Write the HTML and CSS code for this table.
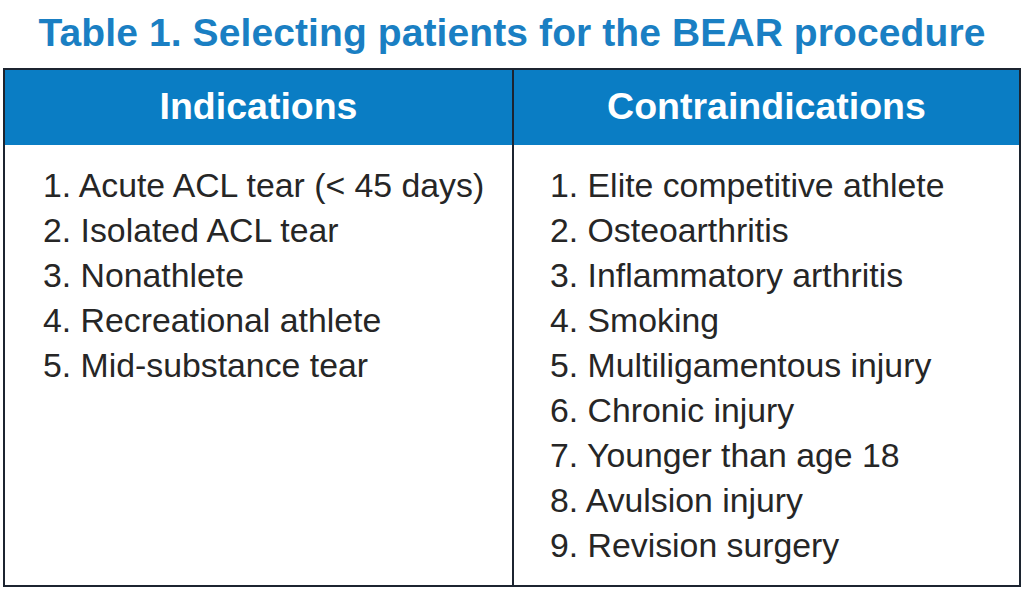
FILE: index.html
```html
<!DOCTYPE html>
<html>
<head>
<meta charset="utf-8">
<link rel="stylesheet" href="styles.css">
</head>
<body>
<div class="page">
  <h1 class="title">Table 1. Selecting patients for the BEAR procedure</h1>
  <div class="table">
    <div class="head">Indications</div>
    <div class="head divider">Contraindications</div>
    <ol class="cell left">
      <li>1. Acute ACL tear (&lt; 45 days)</li>
      <li>2. Isolated ACL tear</li>
      <li>3. Nonathlete</li>
      <li>4. Recreational athlete</li>
      <li>5. Mid-substance tear</li>
    </ol>
    <ol class="cell right divider">
      <li>1. Elite competitive athlete</li>
      <li>2. Osteoarthritis</li>
      <li>3. Inflammatory arthritis</li>
      <li>4. Smoking</li>
      <li>5. Multiligamentous injury</li>
      <li>6. Chronic injury</li>
      <li>7. Younger than age 18</li>
      <li>8. Avulsion injury</li>
      <li>9. Revision surgery</li>
    </ol>
  </div>
</div>
</body>
</html>
```

FILE: styles.css
```css
html, body {
  margin: 0;
  padding: 0;
  background: #ffffff;
}
.page {
  width: 1024px;
  height: 592px;
  padding: 0 3px;
  box-sizing: border-box;
  font-family: "Liberation Sans", Arial, sans-serif;
}
.title {
  margin: 0;
  height: 68px;
  line-height: 66px;
  font-size: 39px;
  font-weight: bold;
  color: #1a7fc3;
  text-align: center;
  letter-spacing: 0.1px;
  white-space: nowrap;
}
.table {
  display: grid;
  grid-template-columns: 1fr 1fr;
  grid-template-rows: 75px auto;
  border: 2px solid #1c2430;
  height: 519px;
  box-sizing: border-box;
}
.head {
  background: #0a7dc4;
  color: #ffffff;
  font-size: 37.5px;
  font-weight: bold;
  display: flex;
  align-items: center;
  justify-content: center;
  padding-bottom: 2px;
  box-sizing: border-box;
}
.divider {
  border-left: 2px solid #1c2430;
}
.cell {
  list-style: none;
  margin: 0;
  padding: 18px 0 0 38px;
  font-size: 33.8px;
  line-height: 45px;
  color: #262626;
}
.cell.right {
  padding-left: 36px;
}
.cell li {
  white-space: nowrap;
}
```
